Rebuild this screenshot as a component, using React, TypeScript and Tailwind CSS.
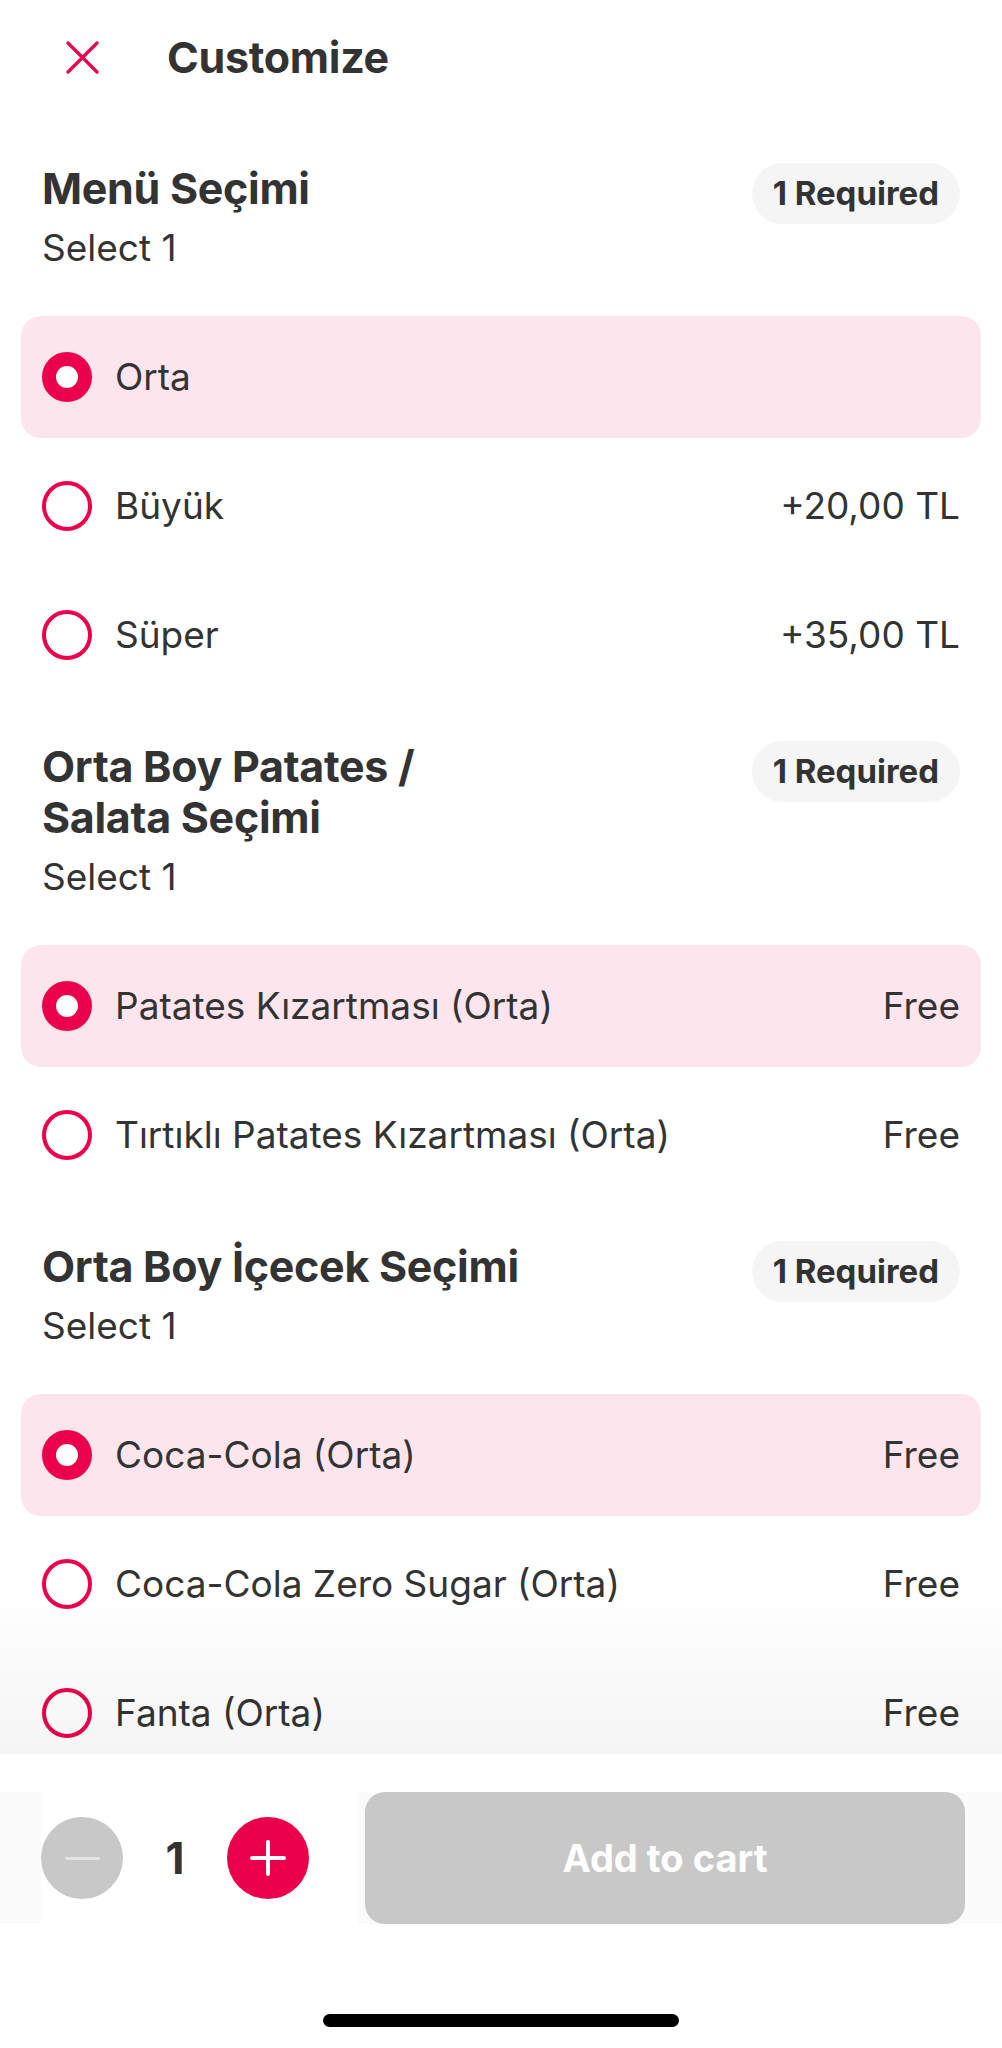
import React from "react";

type Option = { label: string; price?: string; selected?: boolean };

const sections: { title: string; options: Option[] }[] = [
  {
    title: "Menü Seçimi",
    options: [
      { label: "Orta", selected: true },
      { label: "Büyük", price: "+20,00 TL" },
      { label: "Süper", price: "+35,00 TL" },
    ],
  },
  {
    title: "Orta Boy Patates /\nSalata Seçimi",
    options: [
      { label: "Patates Kızartması (Orta)", price: "Free", selected: true },
      { label: "Tırtıklı Patates Kızartması (Orta)", price: "Free" },
    ],
  },
  {
    title: "Orta Boy İçecek Seçimi",
    options: [
      { label: "Coca-Cola (Orta)", price: "Free", selected: true },
      { label: "Coca-Cola Zero Sugar (Orta)", price: "Free" },
      { label: "Fanta (Orta)", price: "Free" },
    ],
  },
];

function Radio({ selected }: { selected?: boolean }) {
  if (selected) {
    return <span className="block h-[50px] w-[50px] shrink-0 rounded-full border-[14px] border-[#ea004b] bg-white" />;
  }
  return <span className="block h-[50px] w-[50px] shrink-0 rounded-full border-[4.5px] border-[#ea004b]" />;
}

function OptionRow({ option }: { option: Option }) {
  return (
    <div className="h-[129px] px-[21px] py-[3.5px]">
      <div
        className={
          "flex h-full items-center rounded-[20px] px-[21px] " + (option.selected ? "bg-[#fde5ed]" : "")
        }
      >
        <Radio selected={option.selected} />
        <span className="ml-[23px] flex-1 text-[37px] text-[#333333]">{option.label}</span>
        {option.price && <span className="text-[37px] text-[#333333]">{option.price}</span>}
      </div>
    </div>
  );
}

export default function App() {
  return (
    <div className="relative flex h-[2048px] w-full flex-col overflow-hidden bg-white font-['Inter',sans-serif] text-[#333333]">
      {/* header */}
      <header className="flex h-[114px] shrink-0 items-center pl-[66px]">
        <svg width="33" height="33" viewBox="0 0 33 33" fill="none">
          <path d="M2 2L31 31M31 2L2 31" stroke="#ea004b" strokeWidth="3.2" strokeLinecap="round" />
        </svg>
        <h1 className="ml-[68px] text-[43px] font-bold tracking-[-0.3px]">Customize</h1>
      </header>

      <div className="flex-1 overflow-hidden">
        {sections.map((s, i) => (
          <section key={i} className={i === 0 ? "pt-[49px]" : "pt-[42px]"}>
            <div className="flex items-start justify-between px-[42px]">
              <div>
                <h2 className="whitespace-pre-line text-[43px] font-bold leading-[51px] tracking-[-0.3px]">
                  {s.title}
                </h2>
                <p className="mt-[12px] text-[37px] leading-[44px]">Select 1</p>
              </div>
              <span className="flex h-[61px] items-center rounded-full bg-[#f5f5f5] px-[21px] text-[33px] font-bold">
                1 Required
              </span>
            </div>
            <div className="mt-[42px]">
              {s.options.map((o, j) => (
                <OptionRow key={j} option={o} />
              ))}
            </div>
          </section>
        ))}
      </div>

      {/* bottom bar */}
      <div className="relative h-[294px] shrink-0 bg-white">
        <div className="pointer-events-none absolute bottom-full left-0 h-[170px] w-full bg-gradient-to-b from-transparent to-black/[0.04]" />
        <div className="mt-[38px] flex h-[132px] items-center bg-[#fbfbfb] pl-[41px] pr-[37px]">
          <div className="flex h-full w-[317px] items-center bg-white">
            <button className="flex h-[82px] w-[82px] items-center justify-center rounded-full bg-[#c8c8c8]">
              <span className="block h-[3px] w-[35px] rounded-full bg-[#e4e4e4]" />
            </button>
            <span className="w-[104px] text-center text-[44px] font-bold">1</span>
            <button className="relative flex h-[82px] w-[82px] items-center justify-center rounded-full bg-[#ea004b]">
              <span className="absolute h-[4px] w-[36px] rounded-full bg-white" />
              <span className="absolute h-[36px] w-[4px] rounded-full bg-white" />
            </button>
          </div>
          <button className="ml-auto flex h-full w-[600px] items-center justify-center rounded-[20px] bg-[#c8c8c8] text-[38px] font-bold text-white">
            Add to cart
          </button>
        </div>
        <div className="mx-auto mt-[90px] h-[13px] w-[356px] rounded-full bg-black" />
      </div>
    </div>
  );
}
